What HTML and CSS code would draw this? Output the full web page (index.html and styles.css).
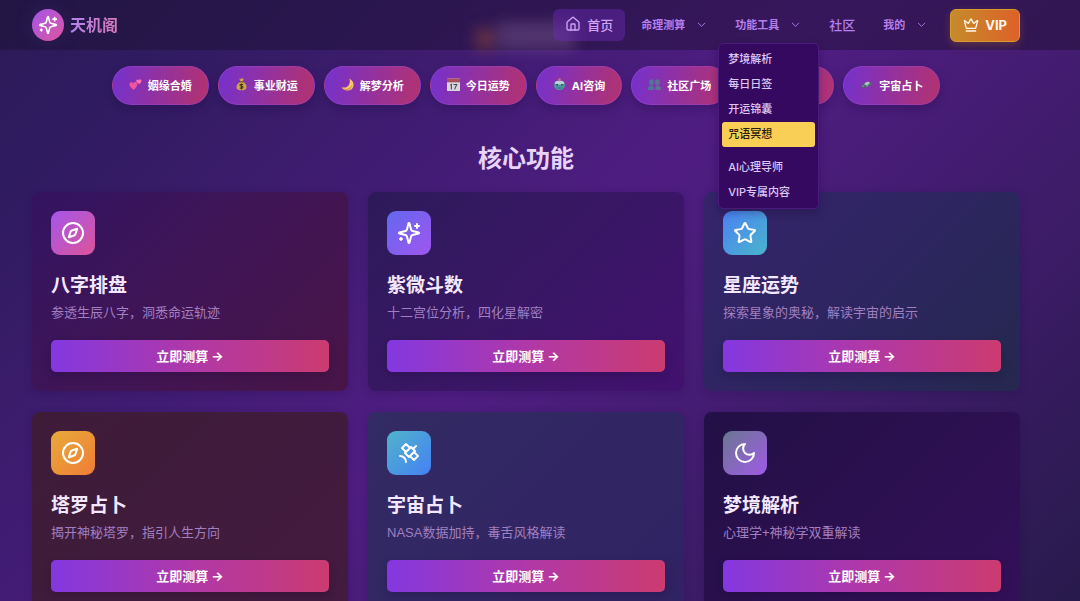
FILE: index.html
```html
<!DOCTYPE html>
<html lang="zh-CN">
<head>
<meta charset="utf-8">
<meta name="viewport" content="width=device-width, initial-scale=1">
<title>天机阁</title>
<link rel="stylesheet" href="styles.css">
</head>
<body>
<svg class="sprite" aria-hidden="true">
  <symbol id="sparkles" viewBox="0 0 24 24"><path d="M9.937 15.5A2 2 0 0 0 8.5 14.063l-6.135-1.582a.5.5 0 0 1 0-.962L8.5 9.936A2 2 0 0 0 9.937 8.5l1.582-6.135a.5.5 0 0 1 .963 0L14.063 8.5A2 2 0 0 0 15.5 9.937l6.135 1.581a.5.5 0 0 1 0 .964L15.5 14.063a2 2 0 0 0-1.437 1.437l-1.582 6.135a.5.5 0 0 1-.963 0z"/><path d="M20 3v4M22 5h-4M4 17v2M5 18H3"/></symbol>
  <symbol id="house" viewBox="0 0 24 24"><path d="M15 21v-8a1 1 0 0 0-1-1h-4a1 1 0 0 0-1 1v8"/><path d="M3 10a2 2 0 0 1 .709-1.528l7-5.999a2 2 0 0 1 2.582 0l7 5.999A2 2 0 0 1 21 10v9a2 2 0 0 1-2 2H5a2 2 0 0 1-2-2z"/></symbol>
  <symbol id="chevron" viewBox="0 0 24 24"><path d="m5 9 7 7 7-7"/></symbol>
  <symbol id="crown" viewBox="0 0 24 24"><path d="M11.562 3.266a.5.5 0 0 1 .876 0L15.39 8.87a1 1 0 0 0 1.516.294L21.183 5.5a.5.5 0 0 1 .798.519l-2.834 10.246a1 1 0 0 1-.956.734H5.81a1 1 0 0 1-.957-.734L2.02 6.02a.5.5 0 0 1 .798-.519l4.276 3.664a1 1 0 0 0 1.516-.294z"/><path d="M5 21h14"/></symbol>
  <symbol id="compass" viewBox="0 0 24 24"><path d="m16.24 7.76-1.804 5.411a2 2 0 0 1-1.265 1.265L7.76 16.24l1.804-5.411a2 2 0 0 1 1.265-1.265z"/><circle cx="12" cy="12" r="10"/></symbol>
  <symbol id="star" viewBox="0 0 24 24"><path d="M11.525 2.295a.53.53 0 0 1 .95 0l2.31 4.679a2.123 2.123 0 0 0 1.595 1.16l5.166.756a.53.53 0 0 1 .294.904l-3.736 3.638a2.123 2.123 0 0 0-.611 1.878l.882 5.14a.53.53 0 0 1-.771.56l-4.618-2.428a2.122 2.122 0 0 0-1.973 0L6.396 21.01a.53.53 0 0 1-.77-.56l.881-5.139a2.122 2.122 0 0 0-.611-1.879L2.16 9.795a.53.53 0 0 1 .294-.906l5.165-.755a2.122 2.122 0 0 0 1.597-1.16z"/></symbol>
  <symbol id="satellite" viewBox="0 0 24 24"><path d="M13 7 9 3 5 7l4 4M17 11l4 4-4 4-4-4M8 12l4 4 6-6-4-4ZM16 8l3-3M9 21a6 6 0 0 0-6-6"/></symbol>
  <symbol id="moon" viewBox="0 0 24 24"><path d="M12 3a6 6 0 0 0 9 9 9 9 0 1 1-9-9Z"/></symbol>
</svg>

<div class="app">
  <header class="topbar">
    <span class="glow glow-warm"></span>
    <span class="glow glow-soft"></span>
    <a class="brand" href="#">
      <span class="brand-mark"><svg class="icon icon-20"><use href="#sparkles"/></svg></span>
      <span class="brand-name">天机阁</span>
    </a>
    <nav class="nav" aria-label="主导航">
      <a class="nav-link nav-current" href="#"><svg class="icon icon-16"><use href="#house"/></svg>首页</a>
      <button class="nav-trigger" type="button">命理测算<svg class="icon icon-11"><use href="#chevron"/></svg></button>
      <div class="dropdown">
        <button class="nav-trigger" type="button" aria-expanded="true">功能工具<svg class="icon icon-11"><use href="#chevron"/></svg></button>
        <div class="menu">
          <a class="menu-item" href="#">梦境解析</a>
          <a class="menu-item" href="#">每日日签</a>
          <a class="menu-item" href="#">开运锦囊</a>
          <a class="menu-item menu-active" href="#">咒语冥想</a>
          <a class="menu-item menu-group" href="#">AI心理导师</a>
          <a class="menu-item" href="#">VIP专属内容</a>
        </div>
      </div>
      <a class="nav-link" href="#">社区</a>
      <button class="nav-trigger" type="button">我的<svg class="icon icon-11"><use href="#chevron"/></svg></button>
    </nav>
    <button class="vip" type="button"><svg class="icon icon-16"><use href="#crown"/></svg>VIP</button>
  </header>

  <main class="content">
    <div class="pills">
      <button class="pill" type="button"><svg class="emoji" viewBox="0 0 24 24"><path fill="#f0569b" d="M9 22C3 18 0 14 1 10.500c1-3 5-3.500 7-.5 1-3 5.500-3.500 7-.5C16.500 13 13 18 9 22z"/><path fill="#ff6fb0" d="M19 11c-4-1.500-6-4-5.500-6.500C14 2.500 17 2 18 4c1-2 4-2 5 0 .7 2-1 5-4 7z"/></svg>姻缘合婚</button>
      <button class="pill" type="button"><svg class="emoji" viewBox="0 0 24 24"><path fill="#c9a64b" d="M8 1l3 1 2-2 3 2-2 5c6 3 8 7 7 12-1 5-17 5-18 0-1-5 2-9 7-12z"/><path stroke="#6b4424" stroke-width="2" d="M8 7h7"/><path fill="none" stroke="#45341f" stroke-width="2" d="M15 12.500c-2-2-6-1-6 1s6 1.500 6 3.500-4 3-6 1M12 10v11"/></svg>事业财运</button>
      <button class="pill" type="button"><svg class="emoji" viewBox="0 0 24 24"><path fill="#f8c768" d="M15 1c9 4 11 14 4 20-6 4-14 2-18-4 6 2 12 0 14-5 2-4 2-8 0-11z"/><path fill="#dc934c" d="M3 19c7 3 14 1 17-6 1 8-10 14-17 6z"/></svg>解梦分析</button>
      <button class="pill" type="button"><svg class="emoji" viewBox="0 0 24 24"><rect x="0" y="1" width="24" height="23" rx="1" fill="#d9d6dc"/><path fill="#a9525b" d="M0 1h24v7H0z"/><path fill="none" stroke="#444a58" stroke-width="2" d="M6 13l2-1v9M12 12h6l-4 9"/></svg>今日运势</button>
      <button class="pill" type="button"><svg class="emoji" viewBox="0 0 24 24"><path fill="#4a969e" d="M1 10h22l-2 8-5 4H8l-5-4z"/><path fill="#b6d3d4" d="M3 10c0-4 4-5 9-5s9 1 9 5l-4 2H7z"/><circle cx="12" cy="3" r="2.500" fill="#cf6c79"/><path fill="#353c68" d="M6 11h3v3H6zM15 11h3v3h-3zM8 18h8v1H8z"/></svg>AI咨询</button>
      <button class="pill" type="button"><svg class="emoji" viewBox="0 0 24 24"><g fill="#487896"><ellipse cx="6.500" cy="8" rx="4.500" ry="5.500"/><path d="M0 22c0-6 2-8 6-8s5 2 5 8z"/></g><g fill="#5c7194"><ellipse cx="17.500" cy="8" rx="4.500" ry="5.500"/><path d="M13 22c0-6 1-8 5-8s6 2 6 8z"/></g></svg>社区广场</button>
      <button class="pill" type="button" aria-label="每日日签"></button>
      <button class="pill" type="button"><svg class="emoji" viewBox="0 0 24 24"><path fill="#506b70" d="M2 16c-1-3 5-6 11-7s10-1 10 1-7 6-12 7-8 0-9-1z"/><path fill="#a8c7bc" d="M8 12c1-5 8-7 10-3 0 3-8 5-10 3z"/><path fill="#76d48d" d="M4 15l3-1v2zM11 14l4-1-2 3z"/></svg>宇宙占卜</button>
    </div>

    <h1 class="title">核心功能</h1>

    <div class="grid">
      <article class="card card-bazi">
        <span class="tile"><svg class="icon icon-24"><use href="#compass"/></svg></span>
        <h2 class="card-title">八字排盘</h2>
        <p class="card-text">参透生辰八字，洞悉命运轨迹</p>
        <button class="action" type="button">立即测算 →</button>
      </article>
      <article class="card card-ziwei">
        <span class="tile"><svg class="icon icon-24"><use href="#sparkles"/></svg></span>
        <h2 class="card-title">紫微斗数</h2>
        <p class="card-text">十二宫位分析，四化星解密</p>
        <button class="action" type="button">立即测算 →</button>
      </article>
      <article class="card card-zodiac">
        <span class="tile"><svg class="icon icon-24"><use href="#star"/></svg></span>
        <h2 class="card-title">星座运势</h2>
        <p class="card-text">探索星象的奥秘，解读宇宙的启示</p>
        <button class="action" type="button">立即测算 →</button>
      </article>
      <article class="card card-tarot">
        <span class="tile"><svg class="icon icon-24"><use href="#compass"/></svg></span>
        <h2 class="card-title">塔罗占卜</h2>
        <p class="card-text">揭开神秘塔罗，指引人生方向</p>
        <button class="action" type="button">立即测算 →</button>
      </article>
      <article class="card card-cosmos">
        <span class="tile"><svg class="icon icon-24"><use href="#satellite"/></svg></span>
        <h2 class="card-title">宇宙占卜</h2>
        <p class="card-text">NASA数据加持，毒舌风格解读</p>
        <button class="action" type="button">立即测算 →</button>
      </article>
      <article class="card card-dream">
        <span class="tile"><svg class="icon icon-24"><use href="#moon"/></svg></span>
        <h2 class="card-title">梦境解析</h2>
        <p class="card-text">心理学+神秘学双重解读</p>
        <button class="action" type="button">立即测算 →</button>
      </article>
    </div>
  </main>
</div>
</body>
</html>
```

FILE: styles.css
```css
* {
  box-sizing: border-box;
}

body {
  margin: 0;
  font-family: Inter, "Noto Sans CJK SC", sans-serif;
  color: #f3e8ff;
}

button {
  font: inherit;
  color: inherit;
  border: 0;
  padding: 0;
  background: none;
  cursor: pointer;
}

a {
  color: inherit;
  text-decoration: none;
}

.sprite {
  position: absolute;
  width: 0;
  height: 0;
}

.app {
  height: 100vh;
  overflow: hidden;
  background: linear-gradient(135deg, #2b1b59 0%, #301b60 12%, #4f1d82 50%, #401c6c 72%, #281a4c 100%);
}

.icon {
  flex: none;
  fill: none;
  stroke: currentColor;
  stroke-width: 2;
  stroke-linecap: round;
  stroke-linejoin: round;
}

.icon-11 { width: 11px; height: 11px; }
.icon-16 { width: 16px; height: 16px; }
.icon-20 { width: 20px; height: 20px; }
.icon-24 { width: 24px; height: 24px; }

/* Top bar */

.topbar {
  position: relative;
  z-index: 2;
  display: flex;
  align-items: center;
  height: 50px;
  padding: 0 60px 0 32px;
  background: rgba(26, 16, 44, 0.44);
}

.glow {
  position: absolute;
  bottom: 0;
  filter: blur(7px);
}

.glow-warm {
  left: 44%;
  width: 20px;
  height: 22px;
  background: rgba(160, 80, 60, 0.45);
}

.glow-soft {
  left: 46%;
  width: 78px;
  height: 28px;
  background: rgba(150, 115, 165, 0.32);
}

.brand {
  display: flex;
  align-items: center;
  gap: 6px;
  margin-right: auto;
}

.brand-mark {
  display: grid;
  place-items: center;
  width: 32px;
  height: 32px;
  border-radius: 50%;
  color: #fff;
  background: linear-gradient(135deg, #a556ea, #dc559e);
  box-shadow: 0 0 20px rgba(110, 80, 200, 0.15);
}

.brand-name {
  font-size: 16px;
  line-height: 24px;
  font-weight: 600;
  color: transparent;
  background: linear-gradient(90deg, #b083ec, #dc7bb8);
  background-clip: text;
}

.nav {
  position: relative;
  display: flex;
  align-items: center;
  gap: 4px;
  margin-right: 11px;
  color: #b57eee;
}

.nav-link,
.nav-trigger {
  display: flex;
  align-items: center;
  height: 32px;
  padding: 0 12px 2px;
  border-radius: 6px;
  white-space: nowrap;
}

.nav-link {
  gap: 6px;
  font-size: 13px;
  font-weight: 500;
}

.nav-current {
  color: #cfa5f5;
  background: rgba(107, 40, 180, 0.45);
}

.nav-trigger {
  gap: 11px;
  font-size: 11px;
  font-weight: 600;
}

.vip {
  display: flex;
  align-items: center;
  gap: 6px;
  height: 33px;
  padding: 0 12px;
  border: 1px solid #d99a2e;
  border-radius: 6px;
  font-size: 13px;
  font-weight: 700;
  color: #fff8e8;
  background: linear-gradient(90deg, #c58b2b, #dd6129);
  box-shadow: 0 3px 8px rgba(220, 130, 40, 0.25);
}

.dropdown {
  position: relative;
}

.menu {
  position: absolute;
  top: 34px;
  left: -5px;
  width: 101px;
  padding: 3px;
  border: 1px solid #4a1a7c;
  border-radius: 5px;
  color: #dcc6f3;
  background: #350960;
  box-shadow: 0 4px 8px rgba(20, 5, 45, 0.3);
}

.menu-item {
  display: block;
  padding: 0 6px;
  border-radius: 3px;
  font-size: 11px;
  line-height: 25px;
  font-weight: 500;
  white-space: nowrap;
}

.menu-active {
  color: #2a1d10;
  background: #f9cf55;
}

.menu-group {
  margin-top: 8px;
}

/* Shortcuts */

.content {
  padding: 16px 60px 32px 32px;
}

.pills {
  display: flex;
  justify-content: center;
  gap: 9px;
}

.pill {
  display: flex;
  align-items: center;
  gap: 6px;
  height: 39px;
  padding: 0 16px 2px;
  border: 1px solid rgba(160, 75, 205, 0.4);
  border-radius: 20px;
  font-size: 11px;
  font-weight: 700;
  color: #fff;
  white-space: nowrap;
  background: linear-gradient(100deg, #7531cc, #b3326f);
  box-shadow: 0 4px 8px rgba(25, 8, 60, 0.25);
}

.pill:empty {
  width: 97px;
}

.emoji {
  flex: none;
  width: 13px;
  height: 13px;
}

.title {
  margin: 38px 0 17px;
  font-size: 24px;
  line-height: 32px;
  font-weight: 700;
  text-align: center;
  color: #e8d3fb;
}

/* Feature cards */

.grid {
  display: grid;
  grid-template-columns: repeat(3, 1fr);
  gap: 21px 20px;
}

.card {
  padding: 19px;
  border-radius: 8px;
  box-shadow: 0 2px 8px rgba(25, 8, 60, 0.2);
}

.tile {
  display: grid;
  place-items: center;
  width: 44px;
  height: 44px;
  border-radius: 9px;
  color: #fff;
}

.card-title {
  margin: 18px 0 4px;
  font-size: 19px;
  line-height: 26px;
  font-weight: 700;
}

.card-text {
  margin: 0 0 17px;
  font-family: "Liberation Sans", "Noto Sans CJK SC", sans-serif;
  font-size: 13px;
  line-height: 20px;
  color: #a17fc0;
}

.action {
  width: 100%;
  height: 32px;
  padding-bottom: 2px;
  border-radius: 5px;
  font-size: 13px;
  font-weight: 700;
  color: #fff;
  background: linear-gradient(90deg, #8338e0, #b038a8 50%, #cb3b70);
  box-shadow: 0 4px 10px rgba(20, 5, 45, 0.2);
}

.card-bazi { background: linear-gradient(135deg, #331361, #401555 50%, #491547); }
.card-bazi .tile { background: linear-gradient(135deg, #a556ea, #dc549a); }

.card-ziwei { background: linear-gradient(135deg, #2d1a59, #391765 50%, #42116f); }
.card-ziwei .tile { background: linear-gradient(135deg, #6268ef, #a056ef); }

.card-zodiac { background: linear-gradient(135deg, #36246b, #2d2560 50%, #25284f); }
.card-zodiac .tile { background: linear-gradient(135deg, #4b82f2, #4ab4cd); }

.card-tarot { background: linear-gradient(135deg, #3e1c38, #431b40); }
.card-tarot .tile { background: linear-gradient(135deg, #e8aa3a, #ef7d36); }

.card-cosmos { background: linear-gradient(135deg, #332b64, #302263); }
.card-cosmos .tile { background: linear-gradient(135deg, #50b4ca, #4580f5); }

.card-dream { background: linear-gradient(135deg, #231046, #331059); }
.card-dream .tile { background: linear-gradient(135deg, #6b7690, #9f5ae8); }
```
